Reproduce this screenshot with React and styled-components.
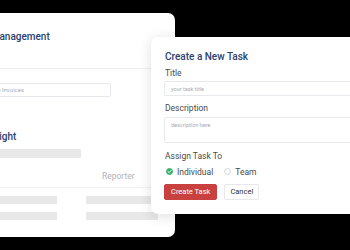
import React from "react";
import styled, { createGlobalStyle } from "styled-components";

const Global = createGlobalStyle`
  html, body { margin: 0; padding: 0; background: #000; }
  body { width: 350px; height: 250px; overflow: hidden; font-family: Roboto, "Liberation Sans", sans-serif; }
  * { box-sizing: border-box; }
`;

const Stage = styled.div`
  position: relative;
  width: 350px;
  height: 250px;
  overflow: hidden;
  background: #000;
  padding-top: 13px;
`;

const BackPanel = styled.div`
  margin-left: -52px;
  width: 227px;
  height: 224px;
  background: #fff;
  border-radius: 7px;
  display: flex;
  flex-direction: column;
`;

const PanelHeader = styled.div`
  padding: 17px 19px 24px;
  border-bottom: 1px solid #eef0f3;
`;

const PanelTitle = styled.div`
  font-size: 10px;
  line-height: 14px;
  font-weight: 500;
  color: #2b4170;
  white-space: nowrap;
`;

const PanelBody = styled.div`
  padding: 14px 0 0 19px;
  display: flex;
  flex-direction: column;
`;

const SearchBox = styled.div`
  width: 144px;
  height: 14px;
  border: 1px solid #e6e8eb;
  border-radius: 2px;
  font-size: 6px;
  line-height: 12px;
  color: #a9adb3;
  padding-left: 14px;
  white-space: nowrap;
`;

const SectionTitle = styled.div`
  margin-top: 33px;
  margin-left: -5px;
  font-size: 10px;
  line-height: 14px;
  font-weight: 500;
  color: #2b4170;
  white-space: nowrap;
`;

const Skeleton = styled.div`
  height: ${(p) => p.$h || 8}px;
  width: ${(p) => p.$w}px;
  background: #e8e8e8;
  border-radius: 1px;
`;

const SummaryBar = styled(Skeleton)`
  margin-top: 5px;
`;

const TableHead = styled.div`
  margin-top: 12px;
  display: grid;
  grid-template-columns: 119px 1fr;
  padding-bottom: 5px;
  border-bottom: 1px solid #f0f1f3;
  margin-left: -19px;
  padding-left: 19px;
`;

const HeadCell = styled.div`
  font-size: 8.5px;
  line-height: 12px;
  color: #b3b3b3;
  padding-left: ${(p) => p.$pad || 0}px;
`;

const Rows = styled.div`
  margin-top: 8px;
  display: flex;
  flex-direction: column;
  gap: 8px;
`;

const Row = styled.div`
  display: grid;
  grid-template-columns: 119px 1fr;
`;

const Dialog = styled.div`
  position: absolute;
  left: 151px;
  top: 37px;
  width: 230px;
  height: 177px;
  background: #fff;
  border-radius: 7px;
  box-shadow: 0 2px 14px rgba(0, 0, 0, 0.13);
  padding: 13px 0 0 13px;
  display: flex;
  flex-direction: column;
`;

const DialogTitle = styled.div`
  font-size: 10px;
  line-height: 14px;
  font-weight: 500;
  color: #2b4170;
  padding-left: 1px;
`;

const Label = styled.div`
  margin-top: ${(p) => p.$mt}px;
  font-size: 8.5px;
  line-height: 13px;
  color: #4a4a4a;
  padding-left: 1px;
`;

const Field = styled.div`
  margin-top: ${(p) => p.$mt}px;
  height: ${(p) => p.$h}px;
  border: 1px solid #e7e9ec;
  border-radius: 2px;
  font-size: 5.5px;
  line-height: 12px;
  color: #a7abb1;
  padding: 1px 6px 0;
`;

const RadioRow = styled.div`
  margin-top: 3px;
  height: 11px;
  display: flex;
  align-items: center;
  gap: 11px;
  padding-left: 2px;
`;

const RadioItem = styled.label`
  display: flex;
  align-items: center;
  gap: 4px;
  font-size: 8.5px;
  color: #4a4a4a;
`;

const Dot = styled.span`
  width: 7px;
  height: 7px;
  border-radius: 50%;
  display: inline-flex;
  align-items: center;
  justify-content: center;
  background: ${(p) => (p.$on ? "#3bb26c" : "#fff")};
  border: 1px solid ${(p) => (p.$on ? "#3bb26c" : "#d5d7da")};
`;

const Buttons = styled.div`
  margin-top: 7px;
  display: flex;
  gap: 7px;
`;

const Button = styled.button`
  height: 16px;
  padding: 0 ${(p) => (p.$primary ? 6 : 5)}px;
  font-family: inherit;
  font-size: 7.5px;
  line-height: 14px;
  border-radius: 2px;
  border: 1px solid ${(p) => (p.$primary ? "#c8413e" : "#e6e8eb")};
  background: ${(p) => (p.$primary ? "#c8413e" : "#fff")};
  color: ${(p) => (p.$primary ? "#fff" : "#333")};
`;

export default function App() {
  return (
    <>
      <Global />
      <Stage>
        <BackPanel>
          <PanelHeader>
            <PanelTitle>Task Management</PanelTitle>
          </PanelHeader>
          <PanelBody>
            <SearchBox>Search Invoices</SearchBox>
            <SectionTitle>Task Insight</SectionTitle>
            <SummaryBar $w={114} $h={9} />
            <TableHead>
              <HeadCell>Task</HeadCell>
              <HeadCell $pad={16}>Reporter</HeadCell>
            </TableHead>
            <Rows>
              <Row>
                <Skeleton $w={90} />
                <Skeleton $w={72} />
              </Row>
              <Row>
                <Skeleton $w={90} />
                <Skeleton $w={72} />
              </Row>
            </Rows>
          </PanelBody>
        </BackPanel>
        <Dialog>
          <DialogTitle>Create a New Task</DialogTitle>
          <Label $mt={3}>Title</Label>
          <Field $mt={1} $h={15}>your task title</Field>
          <Label $mt={6}>Description</Label>
          <Field $mt={2} $h={26}>description here</Field>
          <Label $mt={7}>Assign Task To</Label>
          <RadioRow>
            <RadioItem>
              <Dot $on>
                <svg width="5" height="5" viewBox="0 0 10 10">
                  <path d="M2 5.2 L4.2 7.3 L8 3" fill="none" stroke="#fff" strokeWidth="1.8" strokeLinecap="round" strokeLinejoin="round" />
                </svg>
              </Dot>
              Individual
            </RadioItem>
            <RadioItem>
              <Dot />
              Team
            </RadioItem>
          </RadioRow>
          <Buttons>
            <Button $primary>Create Task</Button>
            <Button>Cancel</Button>
          </Buttons>
        </Dialog>
      </Stage>
    </>
  );
}
